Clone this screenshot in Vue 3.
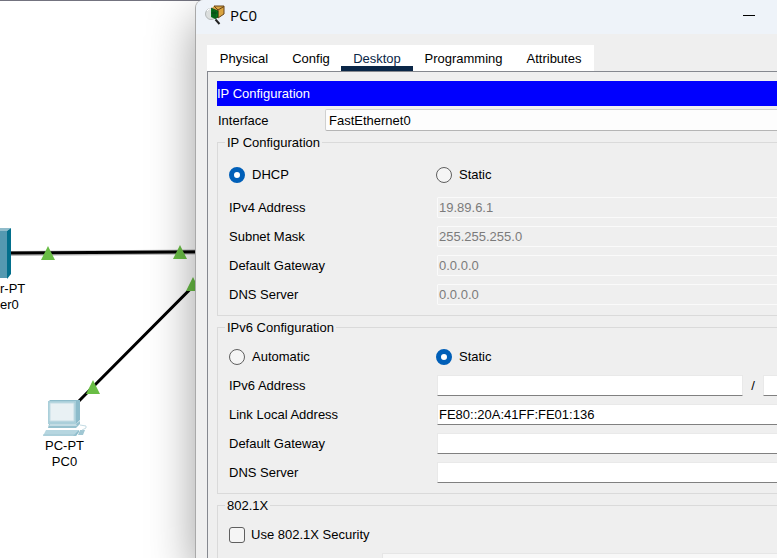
<script setup>
import { ref } from 'vue'

const tabs = ['Physical', 'Config', 'Desktop', 'Programming', 'Attributes']
const active = ref('Desktop')
const iface = ref('FastEthernet0')
const v4mode = ref('dhcp')
const v6mode = ref('static')
const dot1x = ref(false)
const v4 = ref([
  { id: 'v4-address', label: 'IPv4 Address', value: '19.89.6.1' },
  { id: 'v4-mask', label: 'Subnet Mask', value: '255.255.255.0' },
  { id: 'v4-gateway', label: 'Default Gateway', value: '0.0.0.0' },
  { id: 'v4-dns', label: 'DNS Server', value: '0.0.0.0' },
])
const v6address = ref('')
const v6prefix = ref('')
const v6 = ref([
  { id: 'v6-link', label: 'Link Local Address', value: 'FE80::20A:41FF:FE01:136' },
  { id: 'v6-gateway', label: 'Default Gateway', value: '' },
  { id: 'v6-dns', label: 'DNS Server', value: '' },
])
</script>

<template>
  <main class="desktop">
    <section class="canvas">
      <svg class="topology" width="260" height="558" viewBox="0 0 260 558" aria-hidden="true">
        <path d="M10 253.500L260 251.500" stroke="#b8b8b8" stroke-width="5" />
        <path d="M10 253L260 251.500M72 408L260 219" stroke="#000" stroke-width="3" />
        <g fill="#69bd45">
          <path d="M48 246l7 14H41zM180 245l7 14h-14zM193 277l7 14h-14zM93 380l7 14H86z" />
        </g>
        <path d="M0 231h7v47H0z" fill="#5499b1" />
        <path d="M0 231l7 0 4-3H0z" fill="#90bccb" />
        <path d="M7 231l4-3v46l-4 5z" fill="#026f8c" />
        <path d="M48 402l2-2h30v20l-4 4V402z" fill="#8dbccb" />
        <path d="M48 401h28v23H48z" fill="#aacfda" />
        <path d="M50 403h24v18H50z" fill="#e9f1f4" stroke="#c3dce4" />
        <path d="M49 424h27l4-3v3l-4 4H48z" fill="#96c1ce" />
        <path d="M50 424h26l1 2H49z" fill="#c3dce4" />
        <path d="M46 430h33l-3 6H43z" fill="#b6d6e0" />
        <path d="M79 430l0 2-3 4h-3z" fill="#8dbccb" />
        <path d="M43 435h33" stroke="#a0c7d3" />
        <path d="M80 430h5l-2 5h-5z" fill="#a0c7d3" />
        <path d="M80 425l6 1v2l-4 2" fill="none" stroke="#c3dbe3" />
      </svg>
      <p class="node server">r-PT<br>er0</p>
      <p class="node pc">PC-PT<br>PC0</p>
    </section>

    <section class="window" aria-label="PC0">
      <header class="titlebar">
        <svg class="logo" width="20" height="20" viewBox="0 0 20 20" aria-hidden="true">
          <path d="M7 3l2-2 10 0v8l-6 4-5-2z" fill="#d9a441" />
          <path d="M9 1l4 4 6-3.500M13 5v8l6-4V1H9" fill="none" stroke="#69451a" />
          <circle cx="6" cy="9" r="5.500" fill="#dcdfde" stroke="#b4b8b8" />
          <path d="M6 3l7 3v6l-3 2-4-2z" fill="#08751b" />
          <path d="M6 3l7 3v6l-3 2M8 5v7M10 6v7M6 8h6" fill="none" stroke="#0a3d14" stroke-width=".700" />
          <path d="M2 6q2-3 4-2" fill="none" stroke="#fff" />
          <path d="M10.500 14.500l4 4.500" stroke="#222" stroke-width="2" />
        </svg>
        <h1>PC0</h1>
        <button class="minimize" type="button" aria-label="Minimize"></button>
      </header>

      <div class="body">
        <nav class="tabs">
          <button
            v-for="tab in tabs"
            :key="tab"
            type="button"
            :class="{ active: active === tab }"
            @click="active = tab"
          >{{ tab }}</button>
        </nav>

        <div class="pane">
          <h2>IP Configuration</h2>
          <div class="interface">
            <label for="interface">Interface</label>
            <select id="interface" v-model="iface">
              <option>FastEthernet0</option>
            </select>
          </div>

          <fieldset class="v4">
            <legend>IP Configuration</legend>
            <div class="row modes">
              <label class="choice"><input v-model="v4mode" type="radio" name="v4" value="dhcp">DHCP</label>
              <label class="choice"><input v-model="v4mode" type="radio" name="v4" value="static">Static</label>
            </div>
            <div v-for="f in v4" :key="f.id" class="row">
              <label :for="f.id">{{ f.label }}</label>
              <input :id="f.id" v-model="f.value" type="text" :disabled="v4mode === 'dhcp'">
            </div>
          </fieldset>

          <fieldset>
            <legend>IPv6 Configuration</legend>
            <div class="row modes">
              <label class="choice"><input v-model="v6mode" type="radio" name="v6" value="auto">Automatic</label>
              <label class="choice"><input v-model="v6mode" type="radio" name="v6" value="static">Static</label>
            </div>
            <div class="row">
              <label for="v6-address">IPv6 Address</label>
              <div class="prefixed">
                <input id="v6-address" v-model="v6address" type="text">
                <span>/</span>
                <input v-model="v6prefix" class="prefix" type="text" aria-label="Prefix length">
              </div>
            </div>
            <div v-for="f in v6" :key="f.id" class="row">
              <label :for="f.id">{{ f.label }}</label>
              <input :id="f.id" v-model="f.value" type="text">
            </div>
          </fieldset>

          <fieldset>
            <legend>802.1X</legend>
            <label class="choice security"><input v-model="dot1x" type="checkbox">Use 802.1X Security</label>
            <div class="auth"></div>
          </fieldset>
        </div>
      </div>
    </section>
  </main>
</template>

<style>
body {
  margin: 0;
  overflow: hidden;
}
</style>

<style scoped>
.desktop {
  position: relative;
  height: 100vh;
  overflow: hidden;
  background: #fff;
  color: #000;
  font: 13px/15px "Liberation Sans", Arial, sans-serif;
}

.desktop * {
  box-sizing: border-box;
}

.canvas {
  height: 100%;
  border-top: 1px solid #73737f;
}

.topology {
  position: absolute;
  top: 0;
  left: 0;
}

.node {
  position: absolute;
  margin: 0;
  line-height: 16px;
}

.server {
  top: 281px;
  left: 0;
}

.pc {
  top: 438px;
  left: 45px;
  text-align: center;
}

.window {
  position: absolute;
  inset: 0 -87px 0 196px;
  display: flex;
  flex-direction: column;
  border-radius: 8px 0 0;
  background: #efefef;
  box-shadow: -1px 0 0 #a9a9a9, 0 18px 48px rgba(0, 0, 0, 0.4);
}

.titlebar {
  display: flex;
  flex: none;
  align-items: center;
  gap: 5px;
  height: 34px;
  padding: 0 92px 4px 9px;
  border-radius: 8px 0 0;
  background: #eef3f9;
}

h1 {
  flex: 1;
  margin: 0;
  font: 15px/20px "Open Sans", "Noto Sans", sans-serif;
}

button {
  margin: 0;
  padding: 0;
  border: 0;
  background: none;
  color: inherit;
  font: inherit;
}

.minimize {
  display: grid;
  width: 46px;
  height: 30px;
  place-items: center;
}

.minimize::before {
  width: 12px;
  height: 1px;
  background: #000;
  content: "";
}

.body {
  display: flex;
  flex: 1;
  flex-direction: column;
  padding: 11px 11px 0;
}

.tabs {
  display: grid;
  grid-template-columns: 74px 60px 72px 101px 80px;
  align-self: flex-start;
  background: #fff;
}

.tabs button {
  height: 26px;
  border-bottom: 5px solid transparent;
  padding-top: 5px;
}

.tabs .active {
  border-color: #0a2647;
  color: #0a2647;
}

.pane {
  display: flex;
  flex: 1;
  flex-direction: column;
  gap: 4px;
  border: 1px solid #85888f;
  padding: 9px 9px 0;
}

h2 {
  margin: 0 0 -1px;
  background: #00f;
  color: #fff;
  font: inherit;
  line-height: 25px;
}

.interface {
  display: grid;
  grid-template-columns: 108px 1fr;
  align-items: center;
}

.interface label {
  padding-left: 1px;
}

select {
  height: 22px;
  appearance: none;
  border: 1px solid #d0d0d0;
  border-bottom-color: #b5b5b5;
  border-radius: 2px;
  padding: 0 3px;
  background: #fdfdfd;
  color: inherit;
  font: inherit;
}

fieldset {
  display: flex;
  flex-direction: column;
  gap: 8px;
  min-width: 0;
  margin: 0;
  border: 1px solid #dadada;
  padding: 11px 9px 10px 11px;
}

.v4 {
  padding-top: 14px;
}

.v4 .modes {
  margin-bottom: 4px;
}

legend {
  margin-left: -4px;
  padding: 0 2px;
}

.row {
  display: grid;
  grid-template-columns: 208px 1fr;
  align-items: center;
  height: 21px;
}

.modes {
  grid-template-columns: 207px 1fr;
}

.choice {
  display: flex;
  align-items: center;
  gap: 7px;
  height: 21px;
}

.security {
  gap: 6px;
}

input {
  margin: 0;
  color: inherit;
  font: inherit;
}

input[type="text"] {
  width: 100%;
  min-width: 0;
  height: 21px;
  border: 1px solid #e9e9e9;
  border-bottom-color: #808080;
  border-radius: 1px;
  padding: 0 1px;
  background: #fff;
}

input[type="text"]:disabled {
  border-color: #fafafa;
  background: #efefef;
  color: #7b7b7b;
}

input[type="radio"],
input[type="checkbox"] {
  width: 16px;
  height: 16px;
  appearance: none;
  border: 1px solid #5f5f5f;
  background: #f5f5f5;
}

input[type="radio"] {
  border-radius: 50%;
}

input[type="radio"]:checked {
  border: 5px solid #005fb8;
  background: #fff;
}

input[type="checkbox"] {
  border-radius: 3px;
}

.prefixed {
  display: flex;
  align-items: center;
}

.prefixed span {
  flex: 0 0 20px;
  text-align: center;
}

.prefixed .prefix {
  flex: 0 0 70px;
}

.auth {
  height: 21px;
  margin-left: 153px;
  border: 1px solid #e6e6e6;
  background: #f8f8f8;
}
</style>
